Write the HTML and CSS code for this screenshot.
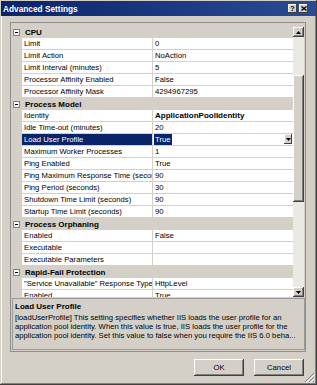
FILE: index.html
```html
<!DOCTYPE html>
<html lang="en">
<head>
  <meta charset="UTF-8">
  <title>Advanced Settings</title>
  <link rel="stylesheet" href="styles.css">
</head>
<body>

  <div class="win">
    <div class="title">
      <span class="caption">Advanced Settings</span>
      <span class="tbtn help">?</span>
      <span class="tbtn close">
        <svg width="6" height="5" viewBox="0 0 6 5"><path d="M0.5 0.5L5.5 4.5M5.5 0.5L0.5 4.5" stroke="#000" stroke-width="1.3"/></svg>
      </span>
    </div>

    <div class="main">
      <div class="pg">
        <div class="gv">
          <div class="rows">
            <div class="cat"><span class="tog"></span>CPU</div>
            <div class="row"><span class="m"></span><span class="n">Limit</span><span class="v">0</span></div>
            <div class="row"><span class="m"></span><span class="n">Limit Action</span><span class="v">NoAction</span></div>
            <div class="row"><span class="m"></span><span class="n">Limit Interval (minutes)</span><span class="v">5</span></div>
            <div class="row"><span class="m"></span><span class="n">Processor Affinity Enabled</span><span class="v">False</span></div>
            <div class="row"><span class="m"></span><span class="n">Processor Affinity Mask</span><span class="v">4294967295</span></div>
            <div class="cat"><span class="tog"></span>Process Model</div>
            <div class="row"><span class="m"></span><span class="n">Identity</span><span class="v b">ApplicationPoolIdentity</span></div>
            <div class="row"><span class="m"></span><span class="n">Idle Time-out (minutes)</span><span class="v">20</span></div>
            <div class="row"><span class="m"></span><span class="n sel">Load User Profile</span><span class="v edit"><span class="hl">True</span><span class="dd"><svg width="5" height="3" viewBox="0 0 5 3"><path d="M0 0H5L2.5 3Z" fill="#000"/></svg></span></span></div>
            <div class="row"><span class="m"></span><span class="n">Maximum Worker Processes</span><span class="v">1</span></div>
            <div class="row"><span class="m"></span><span class="n">Ping Enabled</span><span class="v">True</span></div>
            <div class="row"><span class="m"></span><span class="n">Ping Maximum Response Time (seconds)</span><span class="v">90</span></div>
            <div class="row"><span class="m"></span><span class="n">Ping Period (seconds)</span><span class="v">30</span></div>
            <div class="row"><span class="m"></span><span class="n">Shutdown Time Limit (seconds)</span><span class="v">90</span></div>
            <div class="row"><span class="m"></span><span class="n">Startup Time Limit (seconds)</span><span class="v">90</span></div>
            <div class="cat"><span class="tog"></span>Process Orphaning</div>
            <div class="row"><span class="m"></span><span class="n">Enabled</span><span class="v">False</span></div>
            <div class="row"><span class="m"></span><span class="n">Executable</span><span class="v"></span></div>
            <div class="row"><span class="m"></span><span class="n">Executable Parameters</span><span class="v"></span></div>
            <div class="cat"><span class="tog"></span>Rapid-Fail Protection</div>
            <div class="row"><span class="m"></span><span class="n">"Service Unavailable" Response Type</span><span class="v">HttpLevel</span></div>
            <div class="row"><span class="m"></span><span class="n">Enabled</span><span class="v">True</span></div>
          </div>
          <div class="sb">
            <span class="sbtn"><svg width="5" height="3" viewBox="0 0 5 3"><path d="M2.5 0L5 3H0Z" fill="#000"/></svg></span>
            <span class="track t1"></span>
            <span class="thumb"></span>
            <span class="track t2"></span>
            <span class="sbtn"><svg width="5" height="3" viewBox="0 0 5 3"><path d="M0 0H5L2.5 3Z" fill="#000"/></svg></span>
          </div>
        </div>

        <div class="desc">
          <div class="dtitle">Load User Profile</div>
          <div class="dline">[loadUserProfile] This setting specifies whether IIS loads the user profile for an</div>
          <div class="dline">application pool identity. When this value is true, IIS loads the user profile for the</div>
          <div class="dline">application pool identity. Set this value to false when you require the IIS 6.0 beha...</div>
        </div>
      </div>

      <div class="btns">
        <span class="btn">OK</span>
        <span class="btn">Cancel</span>
      </div>
    </div>

    <svg class="grip" width="11" height="11" viewBox="0 0 11 11">
      <path d="M10 1L1 10M10 5L5 10M10 9L9 10" stroke="#808080" stroke-width="1"/>
      <path d="M11 2L2 11M11 6L6 11" stroke="#fff" stroke-width="1"/>
    </svg>
  </div>

</body>
</html>
```

FILE: styles.css
```css
body{
  margin:0;font-family:"Liberation Sans",Arial,sans-serif;font-size:7.7px;
  color:#000;background:#d4d0c8;
}
.win{
  position:relative;width:317px;height:385px;box-sizing:border-box;padding:1px;
  box-shadow:inset -1px -1px #404040,inset 1px 1px #d4d0c8,inset -2px -2px #808080,inset 2px 2px #fff;
}

/* title bar */
.title{
  height:15px;display:flex;align-items:center;padding-left:2px;
  background:linear-gradient(90deg,#0a246a,#2a4c94);color:#fff;
  font-weight:bold;font-size:8.3px;
}
.caption{flex:1}
.tbtn{
  width:9px;height:9px;margin-left:2px;background:#d4d0c8;color:#000;
  display:flex;align-items:center;justify-content:center;font-size:7px;line-height:9px;
  box-shadow:inset -1px -1px #404040,inset 1px 1px #fff;
}
.close{margin-right:8px}

.main{padding:6px 10px 0 9px}

/* property grid */
.pg{border:1px solid #8e8e8e;height:328px}
.gv{display:flex;height:271px;margin-top:3px}
.rows{flex:1;overflow:hidden}
.row{display:flex;height:12px;line-height:11px}
.row .m{width:11px;flex:none;background:#d4d0c8}
.row .n{
  width:128px;flex:none;padding-left:2px;background:#fff;overflow:hidden;white-space:nowrap;
  border-right:1px solid #d4d0c8;border-bottom:1px solid #d4d0c8;
}
.row .v{
  flex:1;padding-left:2px;background:#fff;white-space:nowrap;
  border-bottom:1px solid #d4d0c8;
}
.row .b{font-weight:bold;font-size:8px}
.row .sel{background:#0a246a;color:#fff}
.edit{display:flex;align-items:flex-start}
.hl{background:#0a246a;color:#fff;padding:0 1px;margin-left:-1px}
.dd{
  margin-left:auto;margin-right:1px;width:8px;height:10px;background:#d4d0c8;
  display:flex;align-items:center;justify-content:center;
  box-shadow:inset -1px -1px #404040,inset 1px 1px #fff;
}
.cat{
  height:12px;display:flex;align-items:center;background:#d4d0c8;font-weight:bold;font-size:8px;
}
.tog{
  width:5px;height:5px;margin:0 5px 0 2px;border:1px solid #808080;background:#fff;
  position:relative;
}
.tog::after{content:"";position:absolute;left:1px;top:2px;width:3px;height:1px;background:#000}

/* scrollbar */
.sb{width:11px;margin-right:1px;display:flex;flex-direction:column;padding-top:1px}
.sbtn{
  height:10px;flex:none;background:#d4d0c8;display:flex;align-items:center;justify-content:center;
  box-shadow:inset -1px -1px #404040,inset 1px 1px #fff,inset -2px -2px #808080;
}
.track{background:#ebe9e4}
.t1{height:38px}
.t2{flex:1}
.thumb{
  height:127px;background:#d4d0c8;
  box-shadow:inset -1px -1px #404040,inset 1px 1px #fff,inset -2px -2px #808080;
}

/* description */
.desc{margin:1px 0 0 1px;height:44px;border:1px solid #9a9a9a;padding:3px 3px 3px 2px;line-height:9px}
.dtitle{font-weight:bold;font-size:8px;margin-bottom:2px}
.dline{white-space:nowrap;overflow:hidden}

/* buttons */
.btns{display:flex;justify-content:flex-end;gap:10px;margin-top:7px;padding-right:2px}
.btn{
  width:50px;height:17px;display:flex;align-items:center;justify-content:center;background:#d4d0c8;
  box-shadow:inset -1px -1px #404040,inset 1px 1px #fff,inset -2px -2px #808080;
}
.grip{position:absolute;right:2px;bottom:2px}
```
